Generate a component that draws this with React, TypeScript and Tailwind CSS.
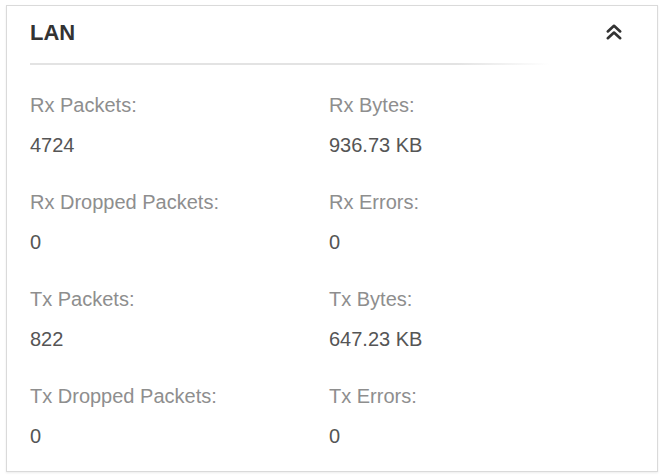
const stats = [
  { label: "Rx Packets:", value: "4724", label2: "Rx Bytes:", value2: "936.73 KB" },
  { label: "Rx Dropped Packets:", value: "0", label2: "Rx Errors:", value2: "0" },
  { label: "Tx Packets:", value: "822", label2: "Tx Bytes:", value2: "647.23 KB" },
  { label: "Tx Dropped Packets:", value: "0", label2: "Tx Errors:", value2: "0" },
]

function Stat({ label, value }: { label: string; value: string }) {
  return (
    <div>
      <div className="leading-[28px] text-[#8e8e8e]">{label}</div>
      <div className="mt-3 leading-[28px] text-[#555]">{value}</div>
    </div>
  )
}

export default function App() {
  return (
    <div className="w-[662px] h-[476px] bg-white pt-[5px] pl-[6px] font-['Liberation_Sans',Arial,sans-serif]">
      <div className="w-[652px] h-[467px] border border-[#dadada] bg-white shadow-[0_1px_2px_rgba(0,0,0,0.08)] pl-[23px] pr-[34px] pt-[13px]">
        <div className="flex items-center justify-between">
          <h2 className="text-[22px] leading-[28px] font-bold text-[#333]">LAN</h2>
          <button className="mt-[-3px] text-[#333]">
            <svg width="18" height="18" viewBox="0 0 16 16" fill="none" stroke="currentColor" strokeWidth="2.4" strokeLinecap="round" strokeLinejoin="round">
              <path d="M2.5 7.5 L8 2.5 L13.5 7.5" />
              <path d="M2.5 13.5 L8 8.5 L13.5 13.5" />
            </svg>
          </button>
        </div>
        <div className="mt-4 h-[2px] w-[520px] bg-[linear-gradient(to_right,#e3e3e3_82%,transparent)]" />

        <div className="mt-[26px] flex flex-col gap-[29px] text-[20px]">
          {stats.map((s) => (
            <div key={s.label} className="grid grid-cols-[299px_1fr]">
              <Stat label={s.label} value={s.value} />
              <Stat label={s.label2} value={s.value2} />
            </div>
          ))}
        </div>
      </div>
    </div>
  )
}
